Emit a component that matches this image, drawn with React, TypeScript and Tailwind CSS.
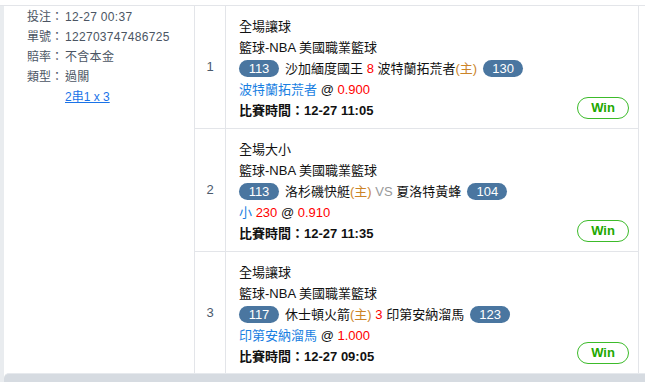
import React from "react";

const FONT = { fontFamily: '"Liberation Sans", Arial, "Noto Sans CJK TC", sans-serif' };

interface BetRow {
  no: number;
  market: string;
  league: string;
  homeScore: number;
  awayScore: number;
  line: React.ReactNode;
  pick: React.ReactNode;
  time: string;
}

const Badge = ({ n }: { n: number }) => (
  <span className="inline-flex items-center justify-center w-[40px] h-[17px] rounded-full bg-[#4a76a0] text-white text-[13px] leading-none">
    {n}
  </span>
);

const Home = () => <span className="text-[#cc8428]">(主)</span>;

const rows: BetRow[] = [
  {
    no: 1,
    market: "全場讓球",
    league: "籃球-NBA 美國職業籃球",
    homeScore: 113,
    awayScore: 130,
    line: (
      <>
        沙加緬度國王 <span className="text-[#ff0000]">8</span> 波特蘭拓荒者<Home />
      </>
    ),
    pick: (
      <>
        <span className="text-[#1a7fe2]">波特蘭拓荒者</span> @ <span className="text-[#ff0000]">0.900</span>
      </>
    ),
    time: "12-27 11:05",
  },
  {
    no: 2,
    market: "全場大小",
    league: "籃球-NBA 美國職業籃球",
    homeScore: 113,
    awayScore: 104,
    line: (
      <>
        洛杉磯快艇<Home /> <span className="text-[#999999]">VS</span> 夏洛特黃蜂
      </>
    ),
    pick: (
      <>
        <span className="text-[#1a7fe2]">小</span> <span className="text-[#ff0000]">230</span> @{" "}
        <span className="text-[#ff0000]">0.910</span>
      </>
    ),
    time: "12-27 11:35",
  },
  {
    no: 3,
    market: "全場讓球",
    league: "籃球-NBA 美國職業籃球",
    homeScore: 117,
    awayScore: 123,
    line: (
      <>
        休士頓火箭<Home /> <span className="text-[#ff0000]">3</span> 印第安納溜馬
      </>
    ),
    pick: (
      <>
        <span className="text-[#1a7fe2]">印第安納溜馬</span> @ <span className="text-[#ff0000]">1.000</span>
      </>
    ),
    time: "12-27 09:05",
  },
];

const info = [
  { label: "投注：", value: "12-27 00:37" },
  { label: "單號：", value: "122703747486725" },
  { label: "賠率：", value: "不含本金" },
  { label: "類型：", value: "過關" },
];

export default function App() {
  return (
    <div className="w-[645px] h-[382px] bg-white flex flex-col overflow-hidden" style={FONT}>
      <div className="h-[5px]" />

      <div className="flex h-[368px] border-t border-[#e3e5e9]">
        <div className="w-[4px] bg-[#e9ecef]" />

        {/* summary */}
        <div className="w-[191px] bg-white rounded-l-[5px] border-r border-[#e3e5e9] pt-[1px] pl-[23px] text-[12px] leading-[20px] text-[#4b5563]">
          {info.map((item) => (
            <div key={item.label} className="flex">
              <span className="w-[38px]">{item.label}</span>
              <span className="tracking-[0.3px]">{item.value}</span>
            </div>
          ))}
          <div className="flex">
            <span className="w-[38px]" />
            <a href="#" className="text-[#1a73e8] underline">2串1 x 3</a>
          </div>
        </div>

        {/* legs */}
        <div className="w-[444px] flex flex-col border-r border-[#e3e5e9]">
          {rows.map((r, i) => (
            <div
              key={r.no}
              className={`flex ${i < rows.length - 1 ? "h-[123px] border-b border-[#e3e5e9]" : "flex-1"}`}
            >
              <div className="w-[31px] border-r border-[#e3e5e9] flex items-center justify-center text-[13px] text-[#4b5a6c]">
                {r.no}
              </div>
              <div className="flex-1 flex justify-between">
                <div className="pt-[10px] pl-[13px] text-[13px] leading-[21px] text-[#111111]">
                  <div>{r.market}</div>
                  <div>{r.league}</div>
                  <div className="flex items-center gap-[6px] whitespace-nowrap">
                    <Badge n={r.homeScore} />
                    <span>{r.line}</span>
                    <Badge n={r.awayScore} />
                  </div>
                  <div>{r.pick}</div>
                  <div className="font-bold">比賽時間：{r.time}</div>
                </div>
                <div className="flex flex-col justify-end pb-[9px] pr-[9px]">
                  <span className="w-[52px] h-[22px] rounded-full border border-[#3cbb2a] text-[#22a800] text-[13px] font-bold flex items-center justify-center">
                    Win
                  </span>
                </div>
              </div>
            </div>
          ))}
        </div>

        <div className="flex-1 bg-white" />
      </div>

      <div className="flex flex-1">
        <div className="w-[4px] bg-[#e9ecef]" />
        <div className="flex-1 bg-[#d6dbe1] rounded-tl-[5px] border-t border-[#e6e9ed]" />
      </div>
    </div>
  );
}
